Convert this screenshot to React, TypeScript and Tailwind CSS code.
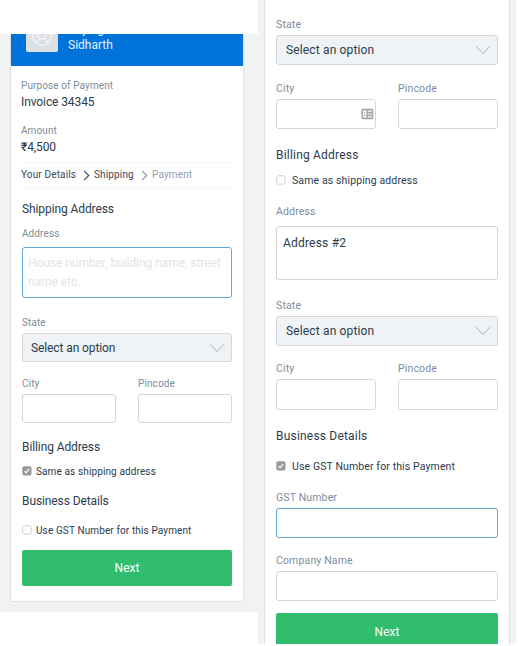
import type { ReactNode } from 'react';

function Label({ children, className = '' }: { children: ReactNode; className?: string }) {
  return <div className={`h-4 whitespace-nowrap pt-px leading-4 text-[#7e8c9c] ${className}`}>{children}</div>;
}

function Heading({ children, className = '' }: { children: ReactNode; className?: string }) {
  return <div className={`h-4 whitespace-nowrap text-xs leading-4 text-[#2b3c4c] ${className}`}>{children}</div>;
}

function Box({ children, className = '' }: { children?: ReactNode; className?: string }) {
  return <div className={`rounded-[3px] border ${className}`}>{children}</div>;
}

function Select({ className = '' }: { className?: string }) {
  return (
    <div className={`flex items-center justify-between rounded-[3px] border border-[#d6d9db] bg-[#eff3f6] pr-[6px] text-xs text-[#2b3c4c] ${className}`}>
      <span>Select an option</span>
      <svg width="16" height="10" viewBox="0 0 16 10" fill="none" stroke="#a9b1b8" strokeWidth="1">
        <path d="M1 1.2 8 8.5 15 1.2" />
      </svg>
    </div>
  );
}

function Check({ checked, children, className = '' }: { checked?: boolean; children: ReactNode; className?: string }) {
  return (
    <div className={`flex h-4 items-center whitespace-nowrap leading-4 tracking-[0.12px] text-[#2b3c4c] ${className}`}>
      <svg className="mb-px shrink-0" width="10" height="10" viewBox="0 0 10 10">
        {checked ? (
          <>
            <rect x="0.3" y="0.3" width="9.2" height="9.2" rx="2" fill="#98999b" />
            <path d="M2.6 5.2 4.1 6.8 7.2 2.8" fill="none" stroke="#fff" strokeWidth="1.2" />
          </>
        ) : (
          <rect x="0.7" y="0.7" width="8.4" height="8.4" rx="1.8" fill="#fff" stroke="#cfcfcf" />
        )}
      </svg>
      <span className="mt-[2px]">{children}</span>
    </div>
  );
}

function Chevron({ color }: { color: string }) {
  return (
    <svg className="mt-[2px]" width="7" height="11" viewBox="0 0 7 11" fill="none" stroke={color} strokeWidth="1.2">
      <path d="M1 1 5.8 5.5 1 10" />
    </svg>
  );
}

function LeftCard() {
  const label = 'text-[10px] tracking-[0.1px]';
  const heading = 'tracking-[-0.1px]';
  return (
    <div className="ml-[10px] flex h-[568px] w-[234px] flex-col rounded-b-[3px] border border-t-0 border-[#dbe2ee] bg-white">
      <div className="flex h-8 shrink-0 bg-[#0073da] pl-[15px]">
        <div className="flex h-[18px] w-8 items-end justify-center overflow-hidden rounded-b-[2px] bg-[#dde1e5]">
          <svg className="mb-[6px] shrink-0" width="20" height="20" viewBox="0 0 20 20" fill="none" stroke="#fff" strokeWidth="1">
            <circle cx="10" cy="10" r="9.2" />
            <ellipse cx="10" cy="8" rx="4.2" ry="5" />
            <path d="M4 17C5 14 6.5 13.5 8 12.5M16 17C15 14 13.5 13.5 12 12.5" />
          </svg>
        </div>
        <div className="-mt-[13px] ml-[10px] text-xs leading-4 text-[#e6f1fc]">
          <div>Paying</div>
          <div>Sidharth</div>
        </div>
      </div>
      <div className="flex flex-col px-[11px]">
        <div className="-ml-px">
          <Label className={`mt-[11px] ${label}`}>Purpose of Payment</Label>
          <Heading className={`mt-px ${heading}`}>Invoice 34345</Heading>
          <Label className={`mt-3 ${label}`}>Amount</Label>
          <Heading className={`mt-px ${heading}`}><span className="font-medium">₹</span>4,500</Heading>
          <div className="mt-[7px] flex h-[26px] items-center border-y border-[#f6f7f8] pb-[2px] text-[10px] tracking-[0.15px] text-[#3c4855]">
            <span className="w-[62px]">Your Details</span>
            <Chevron color="#4b5763" />
            <span className="ml-1 w-[47px]">Shipping</span>
            <Chevron color="#93a0ae" />
            <span className="ml-1 text-[#93a0ae]">Payment</span>
          </div>
        </div>
        <Heading className={`mt-[13px] ${heading}`}>Shipping Address</Heading>
        <Label className={`mt-2 ${label}`}>Address</Label>
        <Box className="mt-[6px] h-[51px] border-[#65a6d9] px-[5px] py-[6px] text-xs leading-[19px] tracking-[-0.05px] text-[#e3e4e5]">
          House number, building name, street name etc.
        </Box>
        <Label className={`mt-4 ${label}`}>State</Label>
        <Select className="mt-[3px] h-[29px] pl-2 tracking-[-0.1px]" />
        <div className="mt-[13px] grid grid-cols-2 gap-[22px]">
          <div>
            <Label className={label}>City</Label>
            <Box className="mt-[3px] h-[29px] border-[#d6d6d6]" />
          </div>
          <div>
            <Label className={label}>Pincode</Label>
            <Box className="mt-[3px] h-[29px] border-[#d6d6d6]" />
          </div>
        </div>
        <Heading className={`mt-4 ${heading}`}>Billing Address</Heading>
        <Check checked className="mt-2 gap-1 text-[10px]">Same as shipping address</Check>
        <Heading className={`mt-[14px] ${heading}`}>Business Details</Heading>
        <Check className="mt-[13px] gap-1 text-[10px]">Use GST Number for this Payment</Check>
        <div className="mt-3 flex h-9 items-center justify-center rounded-[2px] bg-[#30be6e] text-xs text-white">Next</div>
      </div>
    </div>
  );
}

function RightCard() {
  const label = 'text-[10.5px] tracking-[0.15px]';
  const heading = 'tracking-[0.2px]';
  return (
    <div className="ml-[6px] flex h-[644px] w-[246px] flex-col border-x border-[#dbe2ee] bg-white px-[11px]">
      <Label className={`mt-4 ${label}`}>State</Label>
      <Select className="mt-[3px] h-[30px] pl-[9px] tracking-[0.15px]" />
      <div className="mt-[15px] grid grid-cols-2 gap-[22px]">
        <div>
          <Label className={label}>City</Label>
          <Box className="mt-[3px] flex h-[30px] items-center justify-end border-[#d6d6d6] pr-px">
            <svg width="13" height="12" viewBox="0 0 13 12">
              <rect x="0.5" y="0.8" width="11.8" height="10.4" rx="1.2" fill="#a5a5a5" />
              <path d="M2.1 2.4H5.4V9.6H2.1zM6.8 2.6h4v1.2h-4zM6.8 5.4h4v1.2h-4zM6.8 8.2h4v1.2h-4z" fill="#fff" />
              <path d="M3.8 4.2v1.6M2.8 7.4h2" stroke="#a5a5a5" strokeWidth="1" />
            </svg>
          </Box>
        </div>
        <div>
          <Label className={label}>Pincode</Label>
          <Box className="mt-[3px] h-[30px] border-[#d6d6d6]" />
        </div>
      </div>
      <Heading className={`mt-[18px] ${heading}`}>Billing Address</Heading>
      <Check className="mt-[9px] gap-[6px] text-[10.5px]">Same as shipping address</Check>
      <Label className={`mt-[15px] ${label}`}>Address</Label>
      <Box className="mt-[7px] h-[54px] border-[#d6d6d6] px-[6px] py-[8px] text-xs leading-4 tracking-[0.2px] text-[#2b3c4c]">Address #2</Box>
      <Label className={`mt-[17px] ${label}`}>State</Label>
      <Select className="mt-[3px] h-[30px] pl-[9px] tracking-[0.15px]" />
      <div className="mt-[14px] grid grid-cols-2 gap-[22px]">
        <div>
          <Label className={label}>City</Label>
          <Box className="mt-[3px] h-[31px] border-[#d6d6d6]" />
        </div>
        <div>
          <Label className={label}>Pincode</Label>
          <Box className="mt-[3px] h-[31px] border-[#d6d6d6]" />
        </div>
      </div>
      <Heading className={`mt-[18px] ${heading}`}>Business Details</Heading>
      <Check checked className="mt-[14px] gap-[6px] text-[10.5px]">Use GST Number for this Payment</Check>
      <Label className={`mt-[15px] ${label}`}>GST Number</Label>
      <Box className="mt-[3px] h-[30px] border-[#65a6d9]" />
      <Label className={`mt-[14px] ${label}`}>Company Name</Label>
      <Box className="mt-[3px] h-[30px] border-[#d6d6d6]" />
      <div className="mt-3 flex h-[31px] items-start justify-center rounded-t-[2px] bg-[#30be6e] pt-[11px] text-xs leading-4 text-white">Next</div>
    </div>
  );
}

export default function App() {
  return (
    <div className="flex h-[646px] w-[518px] items-start overflow-hidden bg-white font-['Roboto',sans-serif]">
      <div className="mt-[34px] h-[578px] w-[258px] shrink-0 overflow-hidden bg-[#f1f3f3]">
        <LeftCard />
      </div>
      <div className="h-[644px] w-[258px] shrink-0 overflow-hidden bg-[#f1f3f3]">
        <RightCard />
      </div>
    </div>
  );
}
